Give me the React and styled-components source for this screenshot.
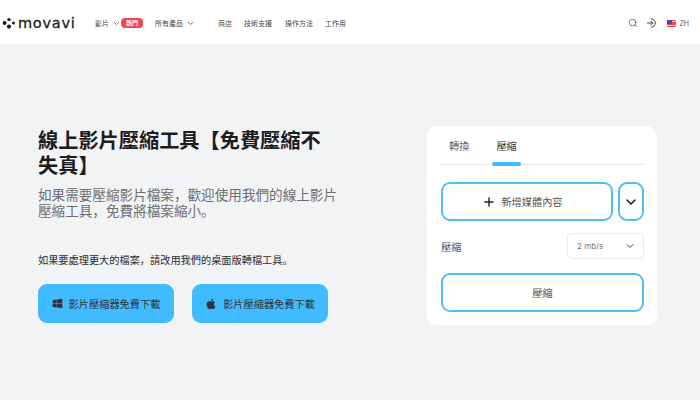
import React from 'react';
import styled, { createGlobalStyle } from 'styled-components';
import { Search, ChevronDown, Plus } from 'lucide-react';
import { FaWindows, FaApple } from 'react-icons/fa';

const GlobalStyle = createGlobalStyle`
  html, body {
    margin: 0;
    padding: 0;
    height: 100%;
    overflow: hidden;
    background: #f2f3f5;
    font-family: Inter, "Noto Sans CJK SC", sans-serif;
  }
  * { box-sizing: border-box; }
`;

const Page = styled.div`
  width: 700px;
  height: 400px;
  display: flex;
  flex-direction: column;
`;

const Header = styled.header`
  height: 44px;
  background: #fff;
  display: flex;
  align-items: center;
  padding: 2px 11px 0 2px;
  color: #444;
`;

const Logo = styled.div`
  display: flex;
  align-items: center;
  gap: 2px;
  width: 93px;
  font-family: "DejaVu Sans", sans-serif;
  font-size: 14.5px;
  font-weight: 400;
  letter-spacing: 0.75px;
  color: #1d1d1f;
  -webkit-text-stroke: 0.3px #1d1d1f;
`;

const Nav = styled.nav`
  display: flex;
  align-items: center;
  font-size: 7px;
`;

const NavItem = styled.span`
  display: flex;
  align-items: center;
  gap: 3px;
  margin-left: ${(p) => p.$left || 0}px;
  margin-right: ${(p) => p.$gap || 0}px;
`;

const Hot = styled.span`
  width: 22px;
  height: 10px;
  background: #f4474c;
  color: #fff;
  border-radius: 4px;
  font-size: 6px;
  font-weight: 700;
  line-height: 10px;
  text-align: center;
`;

const HeaderRight = styled.div`
  margin-left: auto;
  display: flex;
  align-items: center;
  gap: 9px;
  font-size: 7px;
  color: #555;
`;

const Lang = styled.span`
  display: flex;
  align-items: center;
  gap: 3px;
  margin-left: 1px;
`;

const Main = styled.main`
  flex: 1;
  display: flex;
  justify-content: space-between;
  padding: 82px 43px 0 38px;
`;

const Left = styled.section`
  width: 310px;
  padding-top: 2px;
`;

const Title = styled.h1`
  margin: 0;
  width: 290px;
  font-size: 20.2px;
  line-height: 25px;
  font-weight: 700;
  color: #1d1d1f;
`;

const Lead = styled.p`
  margin: 9px 0 0;
  width: 302px;
  font-size: 13.6px;
  line-height: 16px;
  color: #6d6e70;
`;

const Note = styled.p`
  margin: 34px 0 0;
  font-size: 10.2px;
  line-height: 14px;
  color: #2c2c2e;
  white-space: nowrap;
`;

const Downloads = styled.div`
  display: flex;
  gap: 18px;
  margin-top: 17px;
`;

const Download = styled.button`
  width: 136px;
  height: 39px;
  border: 0;
  border-radius: 9px;
  background: #41bbff;
  color: #333;
  font: inherit;
  font-size: 10.2px;
  display: flex;
  align-items: center;
  justify-content: center;
  gap: 6px;
`;

const Card = styled.section`
  width: 230px;
  height: 199px;
  background: #fff;
  border-radius: 10px;
  padding: 0 13px;
`;

const Tabs = styled.div`
  height: 39px;
  display: flex;
  gap: 26px;
  padding: 0 9px;
  border-bottom: 1px solid #e6e7e9;
`;

const Tab = styled.div`
  position: relative;
  font-size: 10.2px;
  line-height: 14px;
  padding-top: 13px;
  color: ${(p) => (p.$active ? '#333' : '#666')};
  margin-left: ${(p) => (p.$active ? 1 : 0)}px;
  ${(p) => p.$active && `
    &::after {
      content: '';
      position: absolute;
      left: -4px;
      right: -4px;
      top: 36px;
      height: 4px;
      border-radius: 2px;
      background: #41bbff;
    }
  `}
`;

const UploadRow = styled.div`
  display: flex;
  gap: 5px;
  margin-top: 17px;
  padding-left: 1px;
`;

const Outline = styled.button`
  height: 39px;
  flex: ${(p) => (p.$narrow ? '0 0 26px' : '1')};
  border: 2px solid #52bdf5;
  border-radius: 9px;
  background: #fff;
  color: #555;
  font: inherit;
  font-size: 10.2px;
  padding: 0 ${(p) => (p.$shift ? 9 : 0)}px 0 0;
  display: flex;
  align-items: center;
  justify-content: center;
  gap: 5px;
`;

const OptionRow = styled.div`
  display: flex;
  align-items: center;
  justify-content: space-between;
  margin-top: 12px;
  padding-left: 1px;
  font-size: 10.2px;
  color: #555;
`;

const Select = styled.div`
  width: 77px;
  height: 26px;
  border: 1px solid #e8e9eb;
  border-radius: 5px;
  display: flex;
  align-items: center;
  justify-content: space-between;
  padding: 0 7px 0 9px;
  font-size: 8px;
  color: #777;
  svg { color: #444; }
`;

const SubmitRow = styled.div`
  display: flex;
  margin-top: 14px;
  padding-left: 1px;
`;

function LogoMark() {
  return (
    <svg width="14" height="12" viewBox="0 0 14 12" fill="#1d1d1f">
      <circle cx="2.6" cy="6" r="2" />
      <circle cx="7" cy="2.6" r="1.7" />
      <circle cx="7" cy="9.6" r="2.1" />
      <circle cx="11.4" cy="6" r="1.5" />
    </svg>
  );
}

function SignIn() {
  return (
    <svg width="10" height="10" viewBox="0 0 10 10" fill="none" stroke="#444" strokeWidth="1" strokeLinecap="round" strokeLinejoin="round">
      <path d="M4.2 0.9a4.1 4.1 0 1 1 0 8.2" />
      <path d="M0.4 5h5.4M4 3.2l1.8 1.8-1.8 1.8" />
    </svg>
  );
}

function Flag() {
  return (
    <svg width="9" height="7" viewBox="0 0 9 7">
      <rect width="9" height="7" rx="1" fill="#e8475a" />
      <rect width="5" height="4" fill="#3d4fa8" />
      <path d="M5 1.5h4M0 5.5h9" stroke="#f3c9d0" strokeWidth="1" />
    </svg>
  );
}

export default function App() {
  return (
    <Page>
      <GlobalStyle />
      <Header>
        <Logo>
          <LogoMark />
          <span>movavi</span>
        </Logo>
        <Nav>
          <NavItem>影片 <ChevronDown size={9} /></NavItem>
          <Hot>熱門</Hot>
          <NavItem $left={12} $gap={23}>所有產品 <ChevronDown size={9} /></NavItem>
          <NavItem $gap={12}>商店</NavItem>
          <NavItem $gap={13}>技術支援</NavItem>
          <NavItem $gap={12}>操作方法</NavItem>
          <NavItem>工作用</NavItem>
        </Nav>
        <HeaderRight>
          <Search size={10} strokeWidth={1.8} />
          <SignIn />
          <Lang><Flag /> ZH</Lang>
        </HeaderRight>
      </Header>
      <Main>
        <Left>
          <Title>線上影片壓縮工具【免費壓縮不失真】</Title>
          <Lead>如果需要壓縮影片檔案，歡迎使用我們的線上影片壓縮工具，免費將檔案縮小。</Lead>
          <Note>如果要處理更大的檔案，請改用我們的桌面版轉檔工具。</Note>
          <Downloads>
            <Download><FaWindows size={11} /> 影片壓縮器免費下載</Download>
            <Download><FaApple size={12} /> 影片壓縮器免費下載</Download>
          </Downloads>
        </Left>
        <Card>
          <Tabs>
            <Tab>轉換</Tab>
            <Tab $active>壓縮</Tab>
          </Tabs>
          <UploadRow>
            <Outline $shift><Plus size={14} color="#222" strokeWidth={2.4} /> 新增媒體內容</Outline>
            <Outline $narrow><ChevronDown size={16} color="#222" strokeWidth={2.4} /></Outline>
          </UploadRow>
          <OptionRow>
            壓縮
            <Select>2 mb/s <ChevronDown size={12} /></Select>
          </OptionRow>
          <SubmitRow>
            <Outline>壓縮</Outline>
          </SubmitRow>
        </Card>
      </Main>
    </Page>
  );
}
